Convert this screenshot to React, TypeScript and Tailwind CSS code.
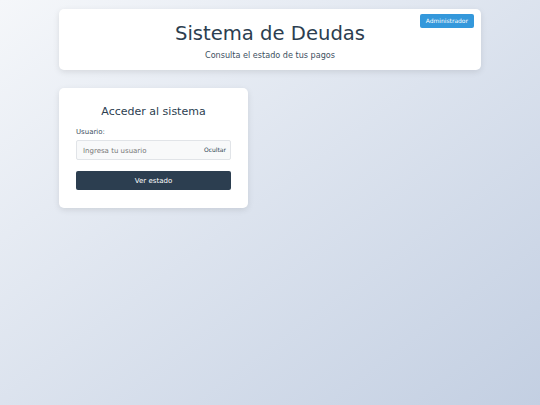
import { useState } from "react";

export default function App() {
  const [hidden, setHidden] = useState(false);

  return (
    <div
      className="min-h-screen w-full bg-gradient-to-br from-[#f5f7fa] to-[#c3cfe2] pt-[9px]"
      style={{ fontFamily: '"DejaVu Sans", Verdana, sans-serif' }}
    >
      <div className="mx-auto w-[422px]">
        {/* Header */}
        <header className="relative h-[61px] rounded-[5px] bg-white pt-[13px] text-center shadow-[0_2px_6px_rgba(0,0,0,0.1)]">
          <button className="absolute right-[7px] top-[5px] h-[14px] rounded-[2px] bg-[#3498db] px-[6px] text-[6px] leading-[14px] text-white">
            Administrador
          </button>
          <h1 className="text-[19.6px] leading-[24px] text-[#2c3e50]">Sistema de Deudas</h1>
          <p className="mt-[4px] text-[8.1px] leading-[10px] text-[#3d4f61]">
            Consulta el estado de tus pagos
          </p>
        </header>

        {/* Content grid */}
        <div className="mt-[18px] grid grid-cols-2 gap-[44px]">
          <div className="rounded-[5px] bg-white p-[17px] pb-[18px] shadow-[0_2px_6px_rgba(0,0,0,0.1)]">
            <h2 className="text-center text-[11px] leading-[13px] text-[#2c3e50]">Acceder al sistema</h2>
            <label className="mt-[10px] block text-[7px] leading-[9px] text-[#3d4f61]">Usuario:</label>
            <div className="relative mt-[3px]">
              <input
                type={hidden ? "password" : "text"}
                placeholder="Ingresa tu usuario"
                className="block h-[20px] w-full rounded-[2px] border border-[#e1e4e8] bg-[#f8f9fa] px-[6px] pt-[2px] text-[7px] text-[#2c3e50] placeholder:text-[#777] outline-none"
              />
              <button
                onClick={() => setHidden((h) => !h)}
                className="absolute right-[5px] top-[6px] text-[6px] leading-[8px] text-[#2c3e50]"
              >
                Ocultar
              </button>
            </div>
            <button className="mt-[11px] block h-[19px] w-full rounded-[2px] bg-[#2c3e50] pt-[1px] text-[7px] text-white">
              Ver estado
            </button>
          </div>
          <div />
        </div>
      </div>
    </div>
  );
}
